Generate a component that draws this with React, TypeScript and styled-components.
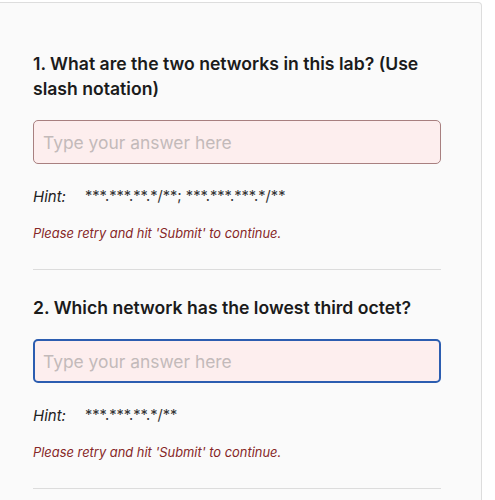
import React from "react";
import styled, { createGlobalStyle } from "styled-components";

const Global = createGlobalStyle`
  html, body { margin: 0; padding: 0; background: #ffffff; }
  body { font-family: Inter, "Noto Sans", sans-serif; }
`;

const Card = styled.div`
  box-sizing: border-box;
  margin-top: 2px;
  width: 482px;
  min-height: 520px;
  background: #fafafa;
  border: 1px solid #dddddd;
  border-left: none;
  border-top-right-radius: 4px;
  padding: 48px 40px 40px 33px;
`;

const Question = styled.section`
  display: flex;
  flex-direction: column;
`;

const Title = styled.h2`
  margin: 0;
  font-size: 17.6px;
  line-height: 25px;
  font-weight: 600;
  color: #1b1b1b;
`;

const Answer = styled.input<{ $focused?: boolean }>`
  box-sizing: border-box;
  margin-top: 19px;
  width: 100%;
  height: 44px;
  padding: 0 ${(p) => (p.$focused ? 8 : 9)}px;
  font-family: Inter, "Noto Sans", sans-serif;
  font-size: 17.4px;
  color: #222;
  background: #fdeeee;
  border: ${(p) => (p.$focused ? "2px solid #2c5db0" : "1px solid #a88080")};
  border-radius: 5px;
  outline: none;
  caret-color: #222;
  &::placeholder { color: #c3baba; }
`;

const HintRow = styled.div`
  margin-top: 22px;
  display: flex;
  align-items: center;
  height: 20px;
  font-size: 15px;
  color: #222;
`;

const HintLabel = styled.span`
  font-style: italic;
  width: 52px;
  flex: none;
`;

const HintMask = styled.span`
  font-size: 14.6px;
  color: #333;
`;

const ErrorText = styled.p`
  margin: 19px 0 0;
  font-size: 12.9px;
  line-height: 18px;
  font-style: italic;
  color: #862727;
`;

const Divider = styled.hr`
  margin: 26px 0 25px;
  border: none;
  height: 1px;
  background: #dcdcdc;
`;

const questions = [
  {
    title: "1. What are the two networks in this lab? (Use slash notation)",
    hint: "***.***.**.*/**; ***.***.***.*/**",
    focused: false,
  },
  {
    title: "2. Which network has the lowest third octet?",
    hint: "***.***.**.*/**",
    focused: true,
  },
];

export default function App() {
  return (
    <>
      <Global />
      <Card>
        {questions.map((q, i) => (
          <Question key={i}>
            <Title>{q.title}</Title>
            <Answer
              $focused={q.focused}
              placeholder="Type your answer here"
              autoFocus={q.focused}
            />
            <HintRow>
              <HintLabel>Hint:</HintLabel>
              <HintMask>{q.hint}</HintMask>
            </HintRow>
            <ErrorText>Please retry and hit 'Submit' to continue.</ErrorText>
            <Divider />
          </Question>
        ))}
      </Card>
    </>
  );
}
